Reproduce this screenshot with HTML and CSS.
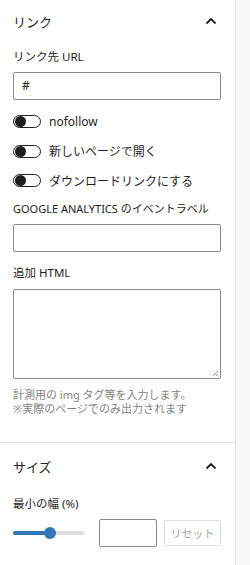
FILE: index.html
```html
<!DOCTYPE html>
<html lang="ja">
<head>
<meta charset="utf-8">
<link rel="stylesheet" href="styles.css">
</head>
<body>
<div class="frame">
  <div class="panel">
    <section class="section">
      <div class="section-head">
        <span class="section-title">リンク</span>
        <svg class="chev" viewBox="0 0 12 8" width="12" height="8"><path d="M1.5 6.5 L6 2 L10.5 6.5" fill="none" stroke="#1e1e1e" stroke-width="1.8"/></svg>
      </div>
      <label class="label">リンク先 URL</label>
      <div class="input">#</div>
      <div class="toggles">
        <div class="toggle-row"><span class="toggle"><span class="knob"></span></span><span>nofollow</span></div>
        <div class="toggle-row"><span class="toggle"><span class="knob"></span></span><span>新しいページで開く</span></div>
        <div class="toggle-row"><span class="toggle"><span class="knob"></span></span><span>ダウンロードリンクにする</span></div>
      </div>
      <label class="label upper">Google Analytics のイベントラベル</label>
      <div class="input"></div>
      <label class="label l-html">追加 HTML</label>
      <div class="textarea">
        <svg class="grip" viewBox="0 0 8 8" width="8" height="8"><path d="M7 2 L2 7 M7 5 L5 7" stroke="#888" stroke-width="0.9"/></svg>
      </div>
      <p class="help">計測用の img タグ等を入力します。<br>※実際のページでのみ出力されます</p>
    </section>
    <section class="section second">
      <div class="section-head">
        <span class="section-title">サイズ</span>
        <svg class="chev" viewBox="0 0 12 8" width="12" height="8"><path d="M1.5 6.5 L6 2 L10.5 6.5" fill="none" stroke="#1e1e1e" stroke-width="1.8"/></svg>
      </div>
      <label class="label">最小の幅 (%)</label>
      <div class="range-row">
        <div class="range">
          <div class="rail"></div>
          <div class="track" style="width:36px"></div>
          <div class="thumb" style="left:36px"></div>
        </div>
        <div class="num"></div>
        <div class="reset">リセット</div>
      </div>
    </section>
  </div>
  <div class="gutter"></div>
</div>
</body>
</html>
```
FILE: styles.css
```css
html, body {
  margin: 0;
  padding: 0;
  background: #fff;
}
body {
  font-family: "Noto Sans", "Noto Sans CJK JP", sans-serif;
  color: #1e1e1e;
  font-size: 12px;
}
.frame {
  display: flex;
  width: 250px;
  height: 565px;
  overflow: hidden;
}
.panel {
  width: 235px;
  border-right: 1px solid #e2e2e2;
  background: #fff;
  flex-shrink: 0;
}
.gutter {
  flex: 1;
  background: #f9f9f9;
}
.section {
  padding: 0 14px 0 13px;
}
.section + .section {
  border-top: 1px solid #e0e0e0;
}
.section:first-child {
  height: 442px;
}
.section-head {
  display: flex;
  align-items: center;
  justify-content: space-between;
  height: 42px;
  padding-right: 4px;
}
.second .section-head {
  height: 46px;
}
.section-title {
  font-size: 13px;
  color: #1e1e1e;
}
.label {
  display: block;
  font-size: 11.5px;
  line-height: 16px;
  margin-top: 7px;
  color: #1e1e1e;
}
.upper {
  text-transform: uppercase;
  font-size: 11px;
  margin-top: 14px;
}
.l-html {
  margin-top: 13px;
}
.input {
  box-sizing: border-box;
  height: 28px;
  border: 1px solid #8c8c8c;
  border-radius: 2px;
  margin-top: 7px;
  padding: 0 8px;
  font-size: 12px;
  line-height: 26px;
  font-family: "Noto Sans", sans-serif;
}
.toggles {
  display: flex;
  flex-direction: column;
  gap: 16.5px;
  margin-top: 15px;
}
.toggle-row {
  display: flex;
  align-items: center;
  gap: 8px;
  height: 13px;
  font-size: 12px;
}
.toggle {
  box-sizing: border-box;
  width: 28px;
  height: 13px;
  border: 1px solid #1e1e1e;
  border-radius: 7px;
  position: relative;
  flex-shrink: 0;
}
.knob {
  position: absolute;
  left: 0.5px;
  top: 0px;
  width: 11px;
  height: 11px;
  border-radius: 50%;
  background: #1e1e1e;
}
.textarea {
  box-sizing: border-box;
  height: 90px;
  border: 1px solid #8c8c8c;
  border-radius: 2px;
  margin-top: 8px;
  position: relative;
}
.grip {
  position: absolute;
  right: 1px;
  bottom: 1px;
}
.help {
  margin: 9px 0 0;
  font-size: 11px;
  line-height: 14px;
  color: #828282;
}
.range-row {
  display: flex;
  align-items: center;
  margin-top: 6px;
  height: 30px;
}
.range {
  position: relative;
  width: 71px;
  height: 12px;
  margin-right: 15px;
}
.rail {
  position: absolute;
  left: 0;
  right: 0;
  top: 4px;
  height: 4px;
  border-radius: 2px;
  background: #dddddd;
}
.track {
  position: absolute;
  left: 0;
  top: 4px;
  height: 4px;
  border-radius: 2px;
  background: #2f77b5;
}
.thumb {
  position: absolute;
  top: 0;
  width: 12px;
  height: 12px;
  margin-left: -5px;
  border-radius: 50%;
  background: #2f77b5;
}
.num {
  box-sizing: border-box;
  width: 58px;
  height: 28px;
  border: 1px solid #8c8c8c;
  border-radius: 2px;
}
.reset {
  box-sizing: border-box;
  margin-left: 7px;
  width: 57px;
  height: 26px;
  border: 1px solid #dcdcdc;
  border-radius: 2px;
  font-size: 11px;
  color: #a7a7a7;
  display: flex;
  align-items: center;
  justify-content: center;
}
```
